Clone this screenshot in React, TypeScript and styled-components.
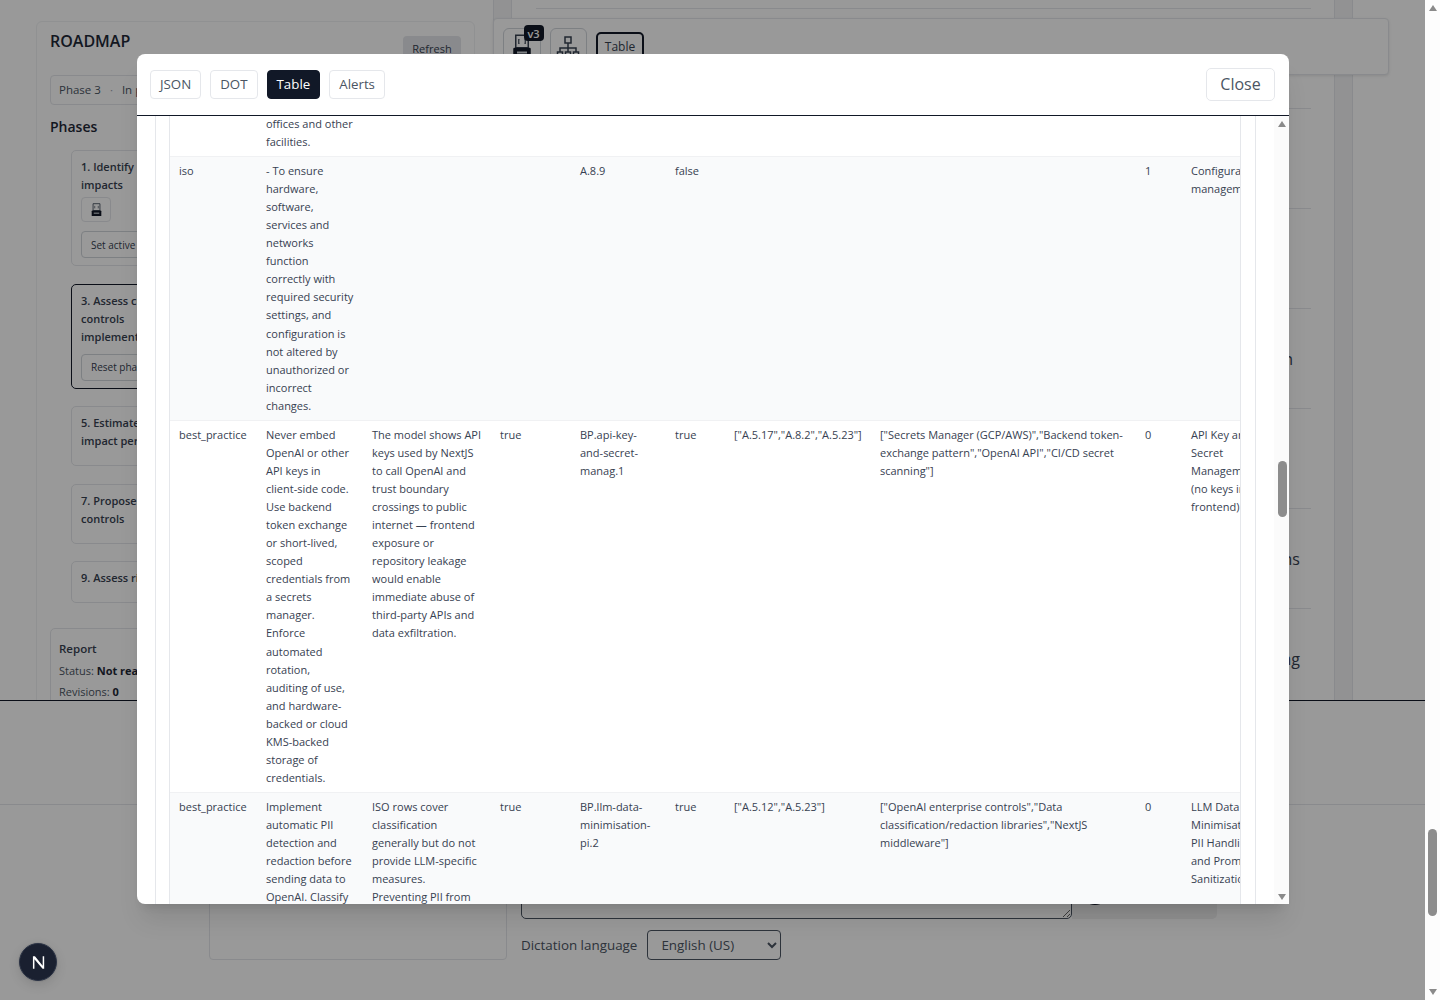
import React from "react";
import styled, { createGlobalStyle } from "styled-components";

const GlobalStyle = createGlobalStyle`
  html, body {
    margin: 0;
    padding: 0;
    height: 100%;
    overflow: hidden;
    background: #fff;
  }
  * { box-sizing: border-box; }
  body {
    font-family: "Open Sans", "Noto Sans", sans-serif;
    color: #374151;
  }
`;

const Shell = styled.div`
  position: relative;
  display: flex;
  width: 1440px;
  height: 1000px;
  overflow: hidden;
`;

const Page = styled.div`
  width: 1425px;
  height: 1000px;
  display: flex;
  flex-direction: column;
`;

const Workspace = styled.div`
  height: 700px;
  display: flex;
  overflow: hidden;
  padding-left: 36px;
  flex: none;
`;

const RoadmapPanel = styled.section`
  width: 439px;
  height: 760px;
  margin-top: 21px;
  margin-right: 18px;
  padding: 8px 13px;
  border: 1px solid #f1f2f4;
  border-radius: 6px;
  flex: none;
`;

const PanelHead = styled.div`
  display: flex;
  justify-content: space-between;
  align-items: flex-start;
  height: 30px;
`;

const RoadmapTitle = styled.h2`
  margin: 0;
  font-size: 16px;
  line-height: 22px;
  font-weight: 600;
  color: #1f2937;
`;

const RefreshButton = styled.button`
  margin-top: 6px;
  height: 25px;
  width: 58px;
  padding: 0;
  font: inherit;
  font-size: 11px;
  color: #374151;
  background: #e5e7eb;
  border: 0;
  border-radius: 4px;
`;

const StatusChip = styled.div`
  margin-top: 15px;
  height: 30px;
  display: flex;
  align-items: center;
  gap: 9px;
  padding: 0 8px 1px;
  font-size: 11.5px;
  color: #4b5563;
  border: 1px solid #e5e7eb;
  border-radius: 4px;
`;

const ChipDot = styled.span`
  color: #9ca3af;
`;

const PhasesTitle = styled.h3`
  margin: 12px 0 13px;
  font-size: 14px;
  line-height: 20px;
  font-weight: 600;
  color: #1f2937;
`;

const PhaseList = styled.div`
  display: flex;
  flex-direction: column;
  gap: 17.5px;
  padding-left: 21px;
`;

const PhaseCard = styled.div<{ $active?: boolean }>`
  width: 190px;
  padding: 7px 9px;
  border: 1px solid ${(p) => (p.$active ? "#111827" : "#e5e7eb")};
  border-radius: 5px;
`;

const PhaseName = styled.div`
  font-size: 11px;
  line-height: 18px;
  font-weight: 600;
  color: #374151;
  min-height: 18px;
  margin-bottom: 8px;
`;

const SmallIconButton = styled.div`
  width: 30px;
  height: 25px;
  margin: -5px 0 9.25px;
  display: flex;
  align-items: center;
  justify-content: center;
  border: 1px solid #e5e7eb;
  border-radius: 4px;
`;

const PhaseAction = styled.button<{ $tight?: boolean }>`
  display: block;
  height: 27px;
  width: 110px;
  padding: 0 9px;
  text-align: left;
  font: inherit;
  font-size: 10px;
  color: #374151;
  background: transparent;
  border: 1px solid #d1d5db;
  border-radius: 4px;
  margin-top: ${(p) => (p.$tight ? "2px" : "0")};
`;

const ReportCard = styled.div`
  margin-top: 24.5px;
  height: 100px;
  padding: 11px 8px;
  border: 1px solid #e5e7eb;
  border-radius: 5px;
  font-size: 11px;
  line-height: 18px;
  color: #4b5563;
`;

const ReportTitle = styled.div`
  font-size: 11.5px;
  font-weight: 600;
  color: #374151;
  margin-bottom: 4px;
`;

const ReportLine = styled.div`
  margin-bottom: 3px;

  b {
    color: #1f2937;
    font-weight: 700;
  }
`;

const RightColumn = styled.div`
  position: relative;
  display: flex;
  flex: none;
  width: 860px;
`;

const Strip = styled.div`
  width: 19px;
  flex: none;
  background: #f3f4f6;
  border-left: 1px solid #e5e7eb;
  border-right: 1px solid #e5e7eb;
`;

const RowsArea = styled.div`
  width: 822px;
  flex: none;
  padding: 0 23px 0 24px;
`;

const ResultRow = styled.div<{ $first?: boolean; $inset?: number }>`
  height: ${(p) => (p.$first ? "9px" : "100px")};
  display: flex;
  align-items: center;
  justify-content: flex-end;
  padding-right: ${(p) => p.$inset ?? 0}px;
  font-size: 16px;
  color: #374151;
  border-bottom: 1px solid #e5e7eb;
`;

const Toolbar = styled.div`
  position: absolute;
  top: 18px;
  left: 0;
  width: 896px;
  height: 57px;
  display: flex;
  align-items: center;
  gap: 9px;
  padding-left: 9px;
  background: #fff;
  border: 1px solid #e5e7eb;
  border-radius: 4px;
  box-shadow: 0 1px 3px rgba(0, 0, 0, 0.1);
`;

const ToolButton = styled.div`
  position: relative;
  width: 37.5px;
  height: 37px;
  display: flex;
  align-items: center;
  justify-content: center;
  border: 1px solid #d1d5db;
  border-radius: 6px;
`;

const VersionBadge = styled.span`
  position: absolute;
  top: -4px;
  right: -4px;
  width: 20px;
  height: 16px;
  display: flex;
  align-items: center;
  justify-content: center;
  font-size: 11px;
  font-weight: 600;
  color: #fff;
  background: #111827;
  border-radius: 4px;
`;

const TableToggle = styled.div`
  width: 48px;
  height: 29px;
  display: flex;
  align-items: center;
  justify-content: center;
  font-size: 12px;
  color: #374151;
  border: 2px solid #111827;
  border-radius: 5px;
`;

const MiddleBar = styled.div`
  height: 105px;
  flex: none;
  border-top: 1px solid #111827;
  border-bottom: 1px solid #e5e7eb;
`;

const Composer = styled.div`
  flex: 1;
  display: flex;
  gap: 14px;
  padding: 15px 0 0 209px;
`;

const NotesPanel = styled.div`
  width: 298px;
  height: 140px;
  border: 1px solid #e5e7eb;
  border-radius: 4px;
`;

const InputColumn = styled.div`
  width: 696px;
`;

const InputRow = styled.div`
  display: flex;
  height: 99px;
`;

const Prompt = styled.textarea`
  width: 551px;
  height: 99px;
  margin: 0;
  padding: 8px;
  background: #fff;
  border: 1px solid #4b5563;
  border-radius: 5px;
`;

const SendBox = styled.div`
  width: 145px;
  height: 99px;
  display: flex;
  align-items: flex-end;
  padding: 0 0 14px 11px;
  background: #f0f0f1;
  border-radius: 0 5px 5px 0;
`;

const MicDot = styled.span`
  width: 24px;
  height: 24px;
  border-radius: 50%;
  background: #111827;
`;

const LanguageRow = styled.div`
  display: flex;
  align-items: center;
  gap: 10px;
  margin-top: 11px;
  font-size: 13.4px;
  color: #4b5563;
`;

const LanguageSelect = styled.select`
  width: 134px;
  height: 30px;
  padding: 0 9px;
  font: inherit;
  color: #4b5563;
  background: #fff;
  border: 1px solid #4b5563;
  border-radius: 4px;
`;

const PageScrollbar = styled.div`
  width: 15px;
  height: 1000px;
  flex: none;
  display: flex;
  flex-direction: column;
  align-items: center;
  background: #fdfdfd;
  padding: 5px 0;
`;

const Arrow = styled.span<{ $down?: boolean }>`
  width: 0;
  height: 0;
  flex: none;
  border-left: 4.5px solid transparent;
  border-right: 4.5px solid transparent;
  ${(p) =>
    p.$down
      ? "border-top: 6px solid #8a8a8a; margin-top: auto;"
      : "border-bottom: 6px solid #8a8a8a;"}
`;

const Thumb = styled.span<{ $offset: number; $length: number }>`
  width: 9px;
  flex: none;
  margin-top: ${(p) => p.$offset}px;
  height: ${(p) => p.$length}px;
  background: #8d8d8d;
  border-radius: 5px;
`;

const Overlay = styled.div`
  position: absolute;
  top: 0;
  left: 0;
  width: 1425px;
  height: 1000px;
  padding: 54px 0 0 137px;
  background: rgba(0, 0, 0, 0.4);
`;

const Modal = styled.div`
  width: 1152px;
  height: 850px;
  display: flex;
  flex-direction: column;
  background: #fff;
  border-radius: 8px 8px 0 8px;
  box-shadow: 0 20px 25px -5px rgba(0, 0, 0, 0.1), 0 8px 10px -6px rgba(0, 0, 0, 0.1);
  overflow: hidden;
`;

const ModalHead = styled.div`
  height: 62px;
  flex: none;
  display: flex;
  align-items: center;
  justify-content: space-between;
  padding: 0 14px 1px 13px;
  border-bottom: 1px solid #111827;
`;

const Tabs = styled.div`
  display: flex;
  gap: 9px;
`;

const Tab = styled.button<{ $active?: boolean }>`
  height: 29px;
  padding: 0 9px;
  font: inherit;
  font-size: 13.3px;
  color: ${(p) => (p.$active ? "#fff" : "#4b5563")};
  background: ${(p) => (p.$active ? "#111827" : "#fff")};
  border: 1px solid ${(p) => (p.$active ? "#111827" : "#e5e7eb")};
  border-radius: 4px;
`;

const CloseButton = styled.button`
  width: 69px;
  height: 33px;
  padding: 0;
  font: inherit;
  font-size: 16px;
  color: #4b5563;
  background: #fff;
  border: 1px solid #e5e7eb;
  border-radius: 5px;
`;

const ModalBody = styled.div`
  flex: 1;
  min-height: 0;
  display: flex;
  padding-left: 18px;
`;

const TableFrame = styled.div`
  width: 1101px;
  flex: none;
  padding: 0 14px 0 13px;
  border-left: 1px solid #e5e7eb;
  border-right: 1px solid #e5e7eb;
`;

const TableClip = styled.div`
  height: 100%;
  overflow: hidden;
  border-left: 1px solid #e5e7eb;
  border-right: 1px solid #e5e7eb;
`;

const DataTable = styled.table`
  width: 1112px;
  margin-top: -1px;
  table-layout: fixed;
  border-collapse: collapse;
  font-size: 11px;
  line-height: 18.08px;
  color: #374151;
`;

const DataRow = styled.tr<{ $shaded?: boolean }>`
  background: ${(p) => (p.$shaded ? "#f9fafb" : "#fff")};
  border-bottom: 1px solid #f0f1f3;
`;

const Cell = styled.td<{ $top?: boolean }>`
  vertical-align: top;
  padding: ${(p) => (p.$top ? "0" : "5px")} 9px 4.7px;
  overflow-wrap: anywhere;
  word-break: normal;
`;

const ModalScrollbar = styled.div`
  width: 16px;
  margin-left: 18px;
  flex: none;
  display: flex;
  flex-direction: column;
  align-items: center;
  padding: 5px 0 4px;
  background: #fbfbfb;
`;

const DevBadge = styled.div`
  position: absolute;
  left: 19px;
  top: 943px;
  width: 38px;
  height: 38px;
  display: flex;
  align-items: center;
  justify-content: center;
  background: #1a2030;
  border: 1px solid #2b3345;
  border-radius: 50%;
  box-shadow: 0 0 0 1px rgba(0, 0, 0, 0.05), 0 4px 12px rgba(0, 0, 0, 0.12);
`;

const JsonIcon = ({ size = 20 }: { size?: number }) => (
  <svg width={size} height={size * 1.25} viewBox="0 0 16 20" fill="none">
    <path d="M3 1h10v10H3z" fill="#fff" stroke="#374151" strokeWidth="1.2" />
    <path d="M6 4.5H5.4v3H6M10 4.5h.6v3H10" stroke="#374151" strokeWidth="0.9" />
    <rect x="1" y="11" width="14" height="8" rx="1" fill="#111827" />
    <rect x="4" y="14" width="8" height="1.6" fill="#d1d5db" />
  </svg>
);

const NetworkIcon = () => (
  <svg width="24" height="24" viewBox="0 0 24 24" fill="none" stroke="#374151" strokeWidth="1.5">
    <rect x="9" y="2" width="6" height="6" />
    <path d="M12 8v5M4 17v-4h16v4M12 13v4" />
    <rect x="1.5" y="17" width="5" height="5.5" />
    <rect x="9.5" y="17" width="5" height="5.5" />
    <rect x="17.5" y="17" width="5" height="5.5" />
  </svg>
);

const rows = [
  {
    shaded: false,
    top: true,
    cells: ["", "offices and other facilities.", "", "", "", "", "", "", "", ""],
  },
  {
    shaded: true,
    cells: [
      "iso",
      "- To ensure hardware, software, services and networks function correctly with required security settings, and configuration is not altered by unauthorized or incorrect changes.",
      "",
      "",
      "A.8.9",
      "false",
      "",
      "",
      "1",
      "Configuration management",
    ],
  },
  {
    shaded: false,
    cells: [
      "best_practice",
      "Never embed OpenAI or other API keys in client-side code. Use backend token exchange or short-lived, scoped credentials from a secrets manager. Enforce automated rotation, auditing of use, and hardware-backed or cloud KMS-backed storage of credentials.",
      "The model shows API keys used by NextJS to call OpenAI and trust boundary crossings to public internet — frontend exposure or repository leakage would enable immediate abuse of third-party APIs and data exfiltration.",
      "true",
      "BP.api-key-and-secret-manag.1",
      "true",
      '["A.5.17","A.8.2","A.5.23"]',
      '["Secrets Manager (GCP/AWS)","Backend token-exchange pattern","OpenAI API","CI/CD secret scanning"]',
      "0",
      "API Key and Secret Management (no keys in frontend)",
    ],
  },
  {
    shaded: true,
    cells: [
      "best_practice",
      "Implement automatic PII detection and redaction before sending data to OpenAI. Classify",
      "ISO rows cover classification generally but do not provide LLM-specific measures. Preventing PII from",
      "true",
      "BP.llm-data-minimisation-pi.2",
      "true",
      '["A.5.12","A.5.23"]',
      '["OpenAI enterprise controls","Data classification/redaction libraries","NextJS middleware"]',
      "0",
      "LLM Data Minimisation, PII Handling and Prompt Sanitization",
    ],
  },
];

const columnWidths = [87, 106, 128, 80, 95, 59, 146, 265, 46, 100];

export default function App() {
  return (
    <Shell>
      <GlobalStyle />
      <Page>
        <Workspace>
          <RoadmapPanel>
            <PanelHead>
              <RoadmapTitle>ROADMAP</RoadmapTitle>
              <RefreshButton>Refresh</RefreshButton>
            </PanelHead>
            <StatusChip>
              Phase 3 <ChipDot>·</ChipDot> In progress
            </StatusChip>
            <PhasesTitle>Phases</PhasesTitle>
            <PhaseList>
              <PhaseCard>
                <PhaseName>
                  1. Identify
                  <br />
                  impacts
                </PhaseName>
                <SmallIconButton>
                  <JsonIcon size={11} />
                </SmallIconButton>
                <PhaseAction>Set active</PhaseAction>
              </PhaseCard>
              <PhaseCard $active>
                <PhaseName>
                  3. Assess current
                  <br />
                  controls
                  <br />
                  implementation
                </PhaseName>
                <PhaseAction $tight>Reset phase</PhaseAction>
              </PhaseCard>
              <PhaseCard>
                <PhaseName>
                  5. Estimate
                  <br />
                  impact per
                </PhaseName>
              </PhaseCard>
              <PhaseCard>
                <PhaseName>
                  7. Propose
                  <br />
                  controls
                </PhaseName>
              </PhaseCard>
              <PhaseCard>
                <PhaseName>9. Assess risk</PhaseName>
              </PhaseCard>
            </PhaseList>
            <ReportCard>
              <ReportTitle>Report</ReportTitle>
              <ReportLine>
                Status: <b>Not ready</b>
              </ReportLine>
              <ReportLine>
                Revisions: <b>0</b>
              </ReportLine>
            </ReportCard>
          </RoadmapPanel>
          <RightColumn>
            <Strip />
            <RowsArea>
              <ResultRow $first />
              <ResultRow />
              <ResultRow />
              <ResultRow />
              <ResultRow $inset={18}>Encryption</ResultRow>
              <ResultRow />
              <ResultRow $inset={11}>Actions</ResultRow>
              <ResultRow $inset={11}>Logging</ResultRow>
            </RowsArea>
            <Strip />
            <Toolbar>
              <ToolButton>
                <JsonIcon />
                <VersionBadge>v3</VersionBadge>
              </ToolButton>
              <ToolButton>
                <NetworkIcon />
              </ToolButton>
              <TableToggle>Table</TableToggle>
            </Toolbar>
          </RightColumn>
        </Workspace>
        <MiddleBar />
        <Composer>
          <NotesPanel />
          <InputColumn>
            <InputRow>
              <Prompt />
              <SendBox>
                <MicDot />
              </SendBox>
            </InputRow>
            <LanguageRow>
              Dictation language
              <LanguageSelect defaultValue="en-US">
                <option value="en-US">English (US)</option>
              </LanguageSelect>
            </LanguageRow>
          </InputColumn>
        </Composer>
      </Page>
      <PageScrollbar>
        <Arrow />
        <Thumb $offset={818} $length={87} />
        <Arrow $down />
      </PageScrollbar>
      <Overlay>
        <Modal>
          <ModalHead>
            <Tabs>
              <Tab>JSON</Tab>
              <Tab>DOT</Tab>
              <Tab $active>Table</Tab>
              <Tab>Alerts</Tab>
            </Tabs>
            <CloseButton>Close</CloseButton>
          </ModalHead>
          <ModalBody>
            <TableFrame>
              <TableClip>
                <DataTable>
                  <colgroup>
                    {columnWidths.map((w, i) => (
                      <col key={i} style={{ width: w }} />
                    ))}
                  </colgroup>
                  <tbody>
                    {rows.map((row, r) => (
                      <DataRow key={r} $shaded={row.shaded}>
                        {row.cells.map((c, i) => (
                          <Cell key={i} $top={row.top}>
                            {c}
                          </Cell>
                        ))}
                      </DataRow>
                    ))}
                  </tbody>
                </DataTable>
              </TableClip>
            </TableFrame>
            <ModalScrollbar>
              <Arrow />
              <Thumb $offset={334} $length={56} />
              <Arrow $down />
            </ModalScrollbar>
          </ModalBody>
        </Modal>
      </Overlay>
      <DevBadge>
        <svg width="15" height="15" viewBox="0 0 14 14" fill="#fff">
          <path d="M1.8 1.2h1.9l7.2 8.9V1.2h1.4v11.6h-1.5L3.2 3.9v8.9H1.8z" />
        </svg>
      </DevBadge>
    </Shell>
  );
}
